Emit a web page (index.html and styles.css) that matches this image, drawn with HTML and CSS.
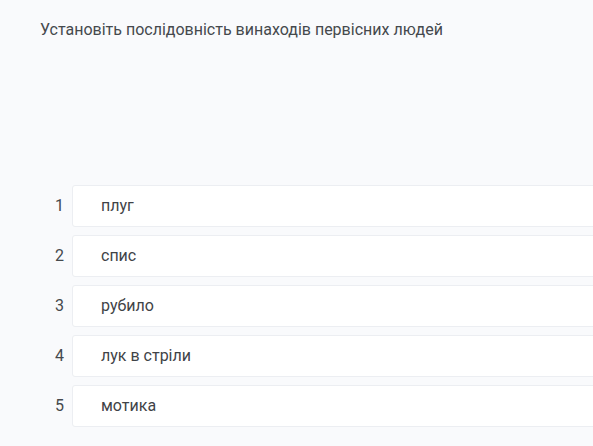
FILE: index.html
```html
<!DOCTYPE html>
<html lang="uk">
<head>
<meta charset="utf-8">
<link rel="stylesheet" href="styles.css">
</head>
<body>
<div class="page">
  <h1 class="question">Установіть послідовність винаходів первісних людей</h1>
  <ol class="list">
    <li class="row"><span class="num">1</span><div class="card">плуг</div></li>
    <li class="row"><span class="num">2</span><div class="card">спис</div></li>
    <li class="row"><span class="num">3</span><div class="card">рубило</div></li>
    <li class="row"><span class="num">4</span><div class="card">лук в стріли</div></li>
    <li class="row"><span class="num">5</span><div class="card">мотика</div></li>
  </ol>
</div>
</body>
</html>
```
FILE: styles.css
```css
html, body {
  margin: 0;
  padding: 0;
  background: #f9fafc;
}
body {
  font-family: Roboto, "Noto Sans", sans-serif;
  color: #3f4347;
  width: 593px;
  height: 446px;
  overflow: hidden;
}
.page {
  width: 593px;
  height: 446px;
  box-sizing: border-box;
  padding: 20px 0 0 40px;
  overflow: hidden;
}
.question {
  margin: 0;
  font-size: 16px;
  font-weight: 400;
  line-height: 20px;
  color: #45494d;
}
.list {
  list-style: none;
  margin: 145px -12px 0 0;
  padding: 0;
  display: flex;
  flex-direction: column;
  gap: 8px;
}
.row {
  display: flex;
  align-items: center;
}
.num {
  flex: none;
  width: 32px;
  padding: 0 0 2px 15px;
  box-sizing: border-box;
  font-size: 16px;
  color: #45494d;
}
.card {
  flex: 1;
  height: 42px;
  box-sizing: border-box;
  background: #ffffff;
  border: 1px solid #eceef2;
  border-radius: 3px;
  padding: 0 0 2px 28px;
  display: flex;
  align-items: center;
  font-size: 16px;
  color: #3f4347;
}
```
